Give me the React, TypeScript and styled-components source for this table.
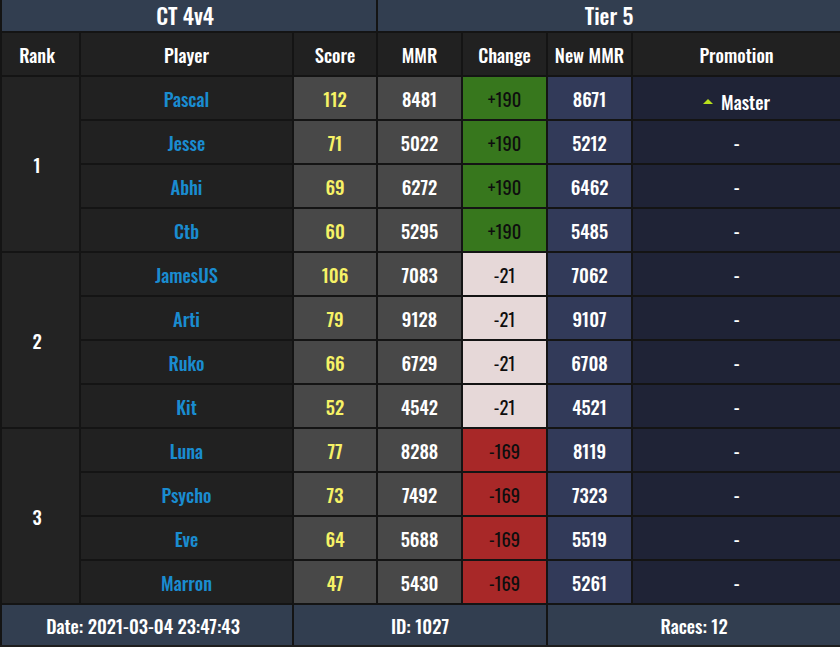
import React from "react";
import styled, { createGlobalStyle } from "styled-components";

const Global = createGlobalStyle`
  html, body { margin: 0; padding: 0; background: #1e1e1e; }
  body { font-family: "Oswald", "Roboto Condensed", "DejaVu Sans Condensed", "Liberation Sans Narrow", sans-serif; }
`;

const Table = styled.table`
  width: 840px;
  border-collapse: collapse;
  table-layout: fixed;
  color: #ffffff;
  font-size: 18.5px;
`;

const Col = styled.col<{ $w: number }>`
  width: ${(p) => p.$w}px;
`;

const TitleCell = styled.th<{ $first?: boolean }>`
  background: #323e50;
  height: 30px;
  line-height: 26px;
  padding: 0 ${(p) => (p.$first ? "8px" : "0")} 1px 0;
  font-size: 22px;
  font-weight: 500;
  border: 2px solid #141414;
  border-top: none;
`;

const HeadCell = styled.th<{ $first?: boolean }>`
  background: #212121;
  height: 42px;
  padding: 0 ${(p) => (p.$first ? "7px" : "0")} 0 0;
  font-weight: 500;
  border: 2px solid #141414;
`;

type Tone = "rank" | "player" | "score" | "mmr" | "up" | "flat" | "down" | "new" | "promo";

const bg: Record<Tone, string> = {
  rank: "#232323",
  player: "#212121",
  score: "#484848",
  mmr: "#484848",
  up: "#37771d",
  flat: "#e6d8d8",
  down: "#a82828",
  new: "#323a59",
  promo: "#1f2336",
};

const fg: Record<Tone, string> = {
  rank: "#ffffff",
  player: "#1a8cd0",
  score: "#f6f266",
  mmr: "#ffffff",
  up: "#0e0e0e",
  flat: "#0e0e0e",
  down: "#0e0e0e",
  new: "#ffffff",
  promo: "#ffffff",
};

const Cell = styled.td<{ $tone: Tone }>`
  background: ${(p) => bg[p.$tone]};
  color: ${(p) => fg[p.$tone]};
  height: 42px;
  padding: 0 ${(p) => (p.$tone === "rank" ? "7px" : "0")} 0 0;
  text-align: center;
  font-weight: ${(p) => (p.$tone === "up" || p.$tone === "flat" || p.$tone === "down" ? 400 : 500)};
  border: 2px solid #141414;
`;

const FootCell = styled.td<{ $first?: boolean }>`
  background: #323e50;
  height: 40px;
  padding: 0 ${(p) => (p.$first ? "8px" : "0")} 0 0;
  text-align: center;
  font-weight: 500;
  font-size: 18.5px;
  border: 2px solid #141414;
  border-bottom: none;
`;

const Promo = styled.span`
  display: inline-flex;
  align-items: center;
  gap: 8px;
`;

const Arrow = styled.span`
  width: 0;
  height: 0;
  border-left: 5px solid transparent;
  border-right: 5px solid transparent;
  border-bottom: 5px solid #b8e01c;
`;

type Player = { name: string; score: number; mmr: number; change: number; promo?: string };

const groups: { rank: number; players: Player[] }[] = [
  {
    rank: 1,
    players: [
      { name: "Pascal", score: 112, mmr: 8481, change: 190, promo: "Master" },
      { name: "Jesse", score: 71, mmr: 5022, change: 190 },
      { name: "Abhi", score: 69, mmr: 6272, change: 190 },
      { name: "Ctb", score: 60, mmr: 5295, change: 190 },
    ],
  },
  {
    rank: 2,
    players: [
      { name: "JamesUS", score: 106, mmr: 7083, change: -21 },
      { name: "Arti", score: 79, mmr: 9128, change: -21 },
      { name: "Ruko", score: 66, mmr: 6729, change: -21 },
      { name: "Kit", score: 52, mmr: 4542, change: -21 },
    ],
  },
  {
    rank: 3,
    players: [
      { name: "Luna", score: 77, mmr: 8288, change: -169 },
      { name: "Psycho", score: 73, mmr: 7492, change: -169 },
      { name: "Eve", score: 64, mmr: 5688, change: -169 },
      { name: "Marron", score: 47, mmr: 5430, change: -169 },
    ],
  },
];

const toneFor = (c: number): Tone => (c > 100 ? "up" : c < -100 ? "down" : c > 0 ? "up" : "flat");

export default function App() {
  return (
    <>
      <Global />
      <Table>
        <colgroup>
          <Col $w={79} />
          <Col $w={213} />
          <Col $w={84} />
          <Col $w={85} />
          <Col $w={85} />
          <Col $w={85} />
          <Col $w={209} />
        </colgroup>
        <thead>
          <tr>
            <TitleCell $first colSpan={3}>CT 4v4</TitleCell>
            <TitleCell colSpan={4}>Tier 5</TitleCell>
          </tr>
          <tr>
            <HeadCell $first>Rank</HeadCell>
            <HeadCell>Player</HeadCell>
            <HeadCell>Score</HeadCell>
            <HeadCell>MMR</HeadCell>
            <HeadCell>Change</HeadCell>
            <HeadCell>New MMR</HeadCell>
            <HeadCell>Promotion</HeadCell>
          </tr>
        </thead>
        <tbody>
          {groups.map((g) =>
            g.players.map((p, i) => (
              <tr key={p.name}>
                {i === 0 && (
                  <Cell $tone="rank" rowSpan={g.players.length}>
                    {g.rank}
                  </Cell>
                )}
                <Cell $tone="player">{p.name}</Cell>
                <Cell $tone="score">{p.score}</Cell>
                <Cell $tone="mmr">{p.mmr}</Cell>
                <Cell $tone={toneFor(p.change)}>{p.change > 0 ? `+${p.change}` : p.change}</Cell>
                <Cell $tone="new">{p.mmr + p.change}</Cell>
                <Cell $tone="promo">
                  {p.promo ? (
                    <Promo>
                      <Arrow />
                      {p.promo}
                    </Promo>
                  ) : (
                    "-"
                  )}
                </Cell>
              </tr>
            ))
          )}
        </tbody>
        <tfoot>
          <tr>
            <FootCell $first colSpan={2}>Date: 2021-03-04 23:47:43</FootCell>
            <FootCell colSpan={3}>ID: 1027</FootCell>
            <FootCell colSpan={2}>Races: 12</FootCell>
          </tr>
        </tfoot>
      </Table>
    </>
  );
}
